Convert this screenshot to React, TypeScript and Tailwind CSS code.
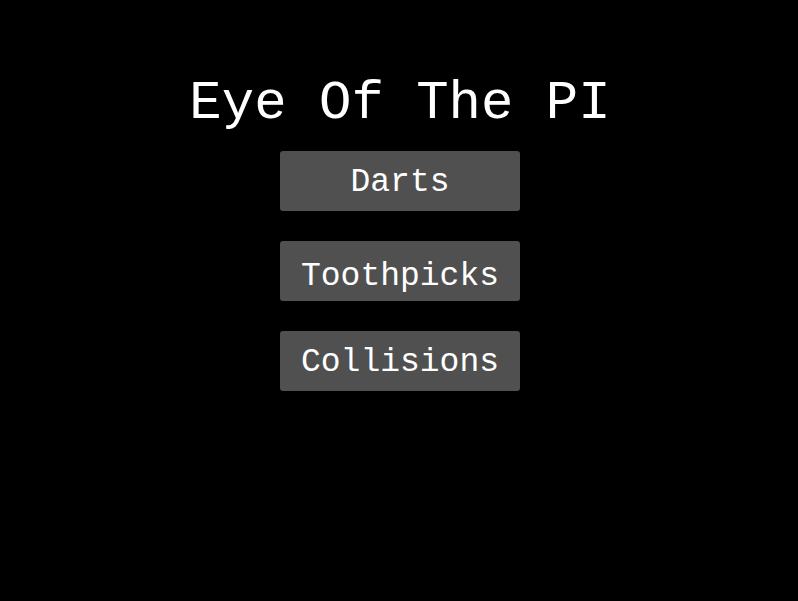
const games = ['Darts', 'Toothpicks', 'Collisions']

export default function App() {
  return (
    <div
      className="flex h-[601px] w-full flex-col items-center bg-black pl-[2px] text-white"
      style={{ fontFamily: '"Liberation Mono", "DejaVu Sans Mono", monospace' }}
    >
      <h1 className="mt-[77px] text-[54px] leading-none whitespace-pre">Eye Of The PI</h1>
      <div className="mt-[20px] flex flex-col gap-[30px]">
        {games.map((name) => (
          <button
            key={name}
            className={
              name === 'Toothpicks'
                ? 'flex h-[60px] w-[240px] items-center justify-center rounded-[3px] bg-[#505050] pt-[11px] text-[33px] leading-none'
                : 'flex h-[60px] w-[240px] items-center justify-center rounded-[3px] bg-[#505050] pt-[3px] text-[33px] leading-none'
            }
          >
            {name}
          </button>
        ))}
      </div>
    </div>
  )
}
